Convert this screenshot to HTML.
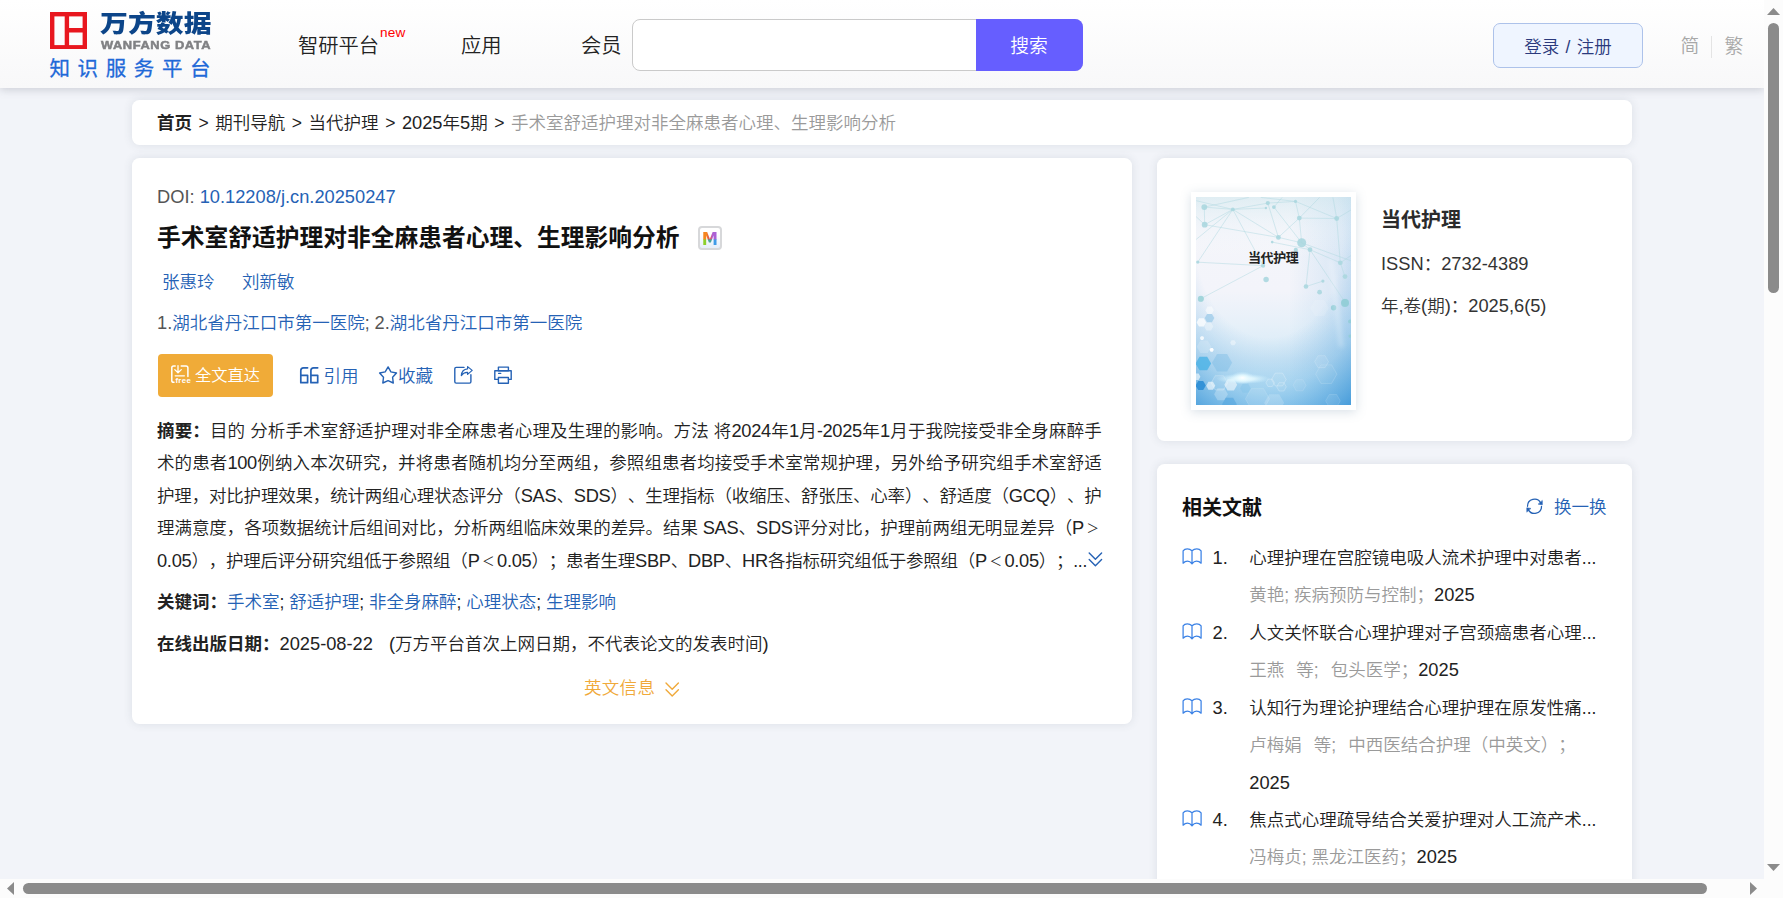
<!DOCTYPE html>
<html lang="zh-CN">
<head>
<meta charset="utf-8">
<title>手术室舒适护理对非全麻患者心理、生理影响分析</title>
<style>
*{box-sizing:border-box;margin:0;padding:0}
html,body{width:1783px;height:898px;overflow:hidden}
body{position:relative;background:#f2f4f9;font-family:"Liberation Sans","Noto Sans CJK SC",sans-serif;font-size:17.5px;font-weight:350;color:#222;text-spacing-trim:space-all}
.abs{position:absolute;white-space:nowrap}
a{color:#2562b5;text-decoration:none}
/* header */
#hdr{position:absolute;left:0;top:0;width:1764px;height:88px;background:linear-gradient(#ffffff,#f8f8f9);box-shadow:0 2px 8px rgba(100,105,120,.26)}
.nav{position:absolute;top:31px;font-size:20.3px;line-height:30px;color:#222;white-space:nowrap}
#sbox{position:absolute;left:631.5px;top:19px;width:451px;height:52px;border:1px solid #cacaca;border-radius:8px;background:#fff}
#sbtn{position:absolute;left:975.5px;top:19px;width:107px;height:52px;background:#665eff;border-radius:0 8px 8px 0;color:#fff;font-size:18.75px;line-height:55px;text-align:center}
#login{position:absolute;left:1493px;top:23px;width:150px;height:45px;border:1px solid #adc2ea;border-radius:7px;background:#eff5ff;color:#2b3a7d;font-size:17.5px;line-height:46px;word-spacing:1.5px;text-align:center}
.card{position:absolute;background:#fff;border-radius:7.5px;box-shadow:0 0 10px rgba(60,70,90,.12)}
/* scrollbars */
#vsb{position:absolute;left:1764px;top:0;width:19px;height:898px;background:#fcfcfc}
#hsb{position:absolute;left:0;top:879px;width:1764px;height:19px;background:#fcfcfc}
.thumb{position:absolute;background:#8b8b8b;border-radius:6px}
.b{font-weight:bold}
.l{font-size:1.045em}
.sep{display:inline-block;width:23.3px;text-align:center}
.g5{color:#555}
.fw{display:inline-block;width:17.5px;text-align:center;text-align-last:center;font-size:12.5px;line-height:1;vertical-align:1.5px;letter-spacing:0}
.jl{position:absolute;left:157px;width:944.5px;letter-spacing:-0.3px;height:32px;line-height:32px;text-align:justify;text-align-last:justify;white-space:nowrap;color:#222}
.rt{position:absolute;left:1249.3px;font-size:17.5px;line-height:30px;white-space:nowrap;color:#222}
.rg{color:#9a9a9a}
.sp{display:inline-block;width:12px}
.num{position:absolute;left:1212.5px;line-height:30px;white-space:nowrap;color:#222}
</style>
</head>
<body>
<div id="hdr">
  <!-- logo -->
  <svg class="abs" style="left:50px;top:11.5px" width="37" height="37.5" viewBox="0 0 37 37.5"><rect x="2.2" y="2.2" width="32.6" height="33.1" fill="none" stroke="#e8171f" stroke-width="4.4"/><rect x="14.7" y="2" width="4.4" height="34" fill="#e8171f"/><rect x="17" y="16" width="18" height="4.5" fill="#e8171f"/></svg>
  <div class="abs" id="lg1" style="left:99.5px;top:6px;font-size:24.4px;line-height:36px;font-weight:900;color:#0c4589;letter-spacing:0;transform:scaleX(1.143);transform-origin:0 0">万方数据</div>
  <div class="abs" id="lg2" style="left:100.5px;top:38.3px;font-size:11.2px;line-height:14px;font-weight:bold;color:#808184;letter-spacing:0.5px;transform:scaleX(1.15);transform-origin:0 0;-webkit-text-stroke:0.5px #808184">WANFANG DATA</div>
  <div class="abs" id="lg3" style="left:49.5px;top:54.5px;font-size:20.5px;line-height:28px;color:#1f69d8;font-weight:400;-webkit-text-stroke:0.3px #1f69d8;letter-spacing:7.6px">知识服务平台</div>
  <div class="nav" style="left:298px">智研平台</div>
  <div class="abs" style="left:380px;top:24.5px;font-size:13.6px;line-height:16px;color:#ff0000;letter-spacing:0.2px">new</div>
  <div class="nav" style="left:461px">应用</div>
  <div class="nav" style="left:581px">会员</div>
  <div id="sbox"></div>
  <div id="sbtn">搜索</div>
  <div id="login">登录 / 注册</div>
  <div class="abs" style="left:1680.5px;top:32px;font-size:18.75px;line-height:30px;color:#a8a8a8">简</div>
  <div class="abs" style="left:1711px;top:36px;width:1px;height:22px;background:#e4e4e4"></div>
  <div class="abs" style="left:1724.5px;top:32px;font-size:18.75px;line-height:30px;color:#a8a8a8">繁</div>
</div>

<!-- breadcrumb -->
<div class="card" style="left:132px;top:100px;width:1500px;height:45px"></div>
<div class="abs" style="left:157px;top:108px;line-height:30px;color:#222"><span class="b">首页</span><span class="sep">&gt;</span>期刊导航<span class="sep">&gt;</span>当代护理<span class="sep">&gt;</span><span class="l">2025</span>年<span class="l">5</span>期<span class="sep">&gt;</span><span style="color:#9a9a9a">手术室舒适护理对非全麻患者心理、生理影响分析</span></div>

<!-- article card -->
<div class="card" style="left:132px;top:158px;width:1000px;height:566px"></div>
<div class="abs" style="left:157px;top:182px;line-height:30px;color:#555"><span class="l">DOI: <a>10.12208/j.cn.20250247</a></span></div>
<div class="abs b" style="left:157px;top:220px;font-size:23.75px;line-height:36px;color:#111;letter-spacing:0">手术室舒适护理对非全麻患者心理、生理影响分析</div>
<div class="abs" style="left:698px;top:226px;width:24px;height:24px;border:2px solid #d7d8da;border-radius:4px;background:linear-gradient(#ffffff 30%,#e6eef9)"></div>
<div class="abs" id="mic" style="left:700px;top:228.5px;width:20px;height:20px;font-family:'DejaVu Sans',sans-serif;font-size:17.6px;font-weight:bold;line-height:20px;text-align:center;transform:scaleX(.93);color:transparent;background:linear-gradient(90deg,#f6861f 0,#f6861f 32%,#e2584f 42%,#e2584f 52%,#b05fd0 62%,#a565dd 100%) 0 0/100% 52% no-repeat,linear-gradient(90deg,#8ccf2a 0,#8ccf2a 32%,#4aa39a 42%,#4aa39a 58%,#3f9be8 68%,#3f9be8 100%) 0 100%/100% 50% no-repeat;-webkit-background-clip:text;background-clip:text">M</div>
<div class="abs" style="left:162px;top:267px;line-height:30px"><a>张惠玲</a></div>
<div class="abs" style="left:242px;top:267px;line-height:30px"><a>刘新敏</a></div>
<div class="abs" style="left:157px;top:307.5px;line-height:30px;color:#2562b5"><span class="l g5">1.</span>湖北省丹江口市第一医院<span class="g5">; <span class="l">2.</span></span>湖北省丹江口市第一医院</div>

<div class="abs" style="left:158px;top:354px;width:115px;height:43px;background:#f0ab38;border-radius:4px"></div>
<svg class="abs" style="left:168px;top:362px" width="26" height="26" viewBox="168 362 26 26" fill="none" stroke="#fff" stroke-width="1.5" stroke-linecap="round" stroke-linejoin="round"><path d="M175.2 365.9H173.6Q171.8 365.9 171.8 367.7V380.4Q171.8 382.3 173.6 382.3H174"/><path d="M181.2 365.9H186Q187.9 365.9 187.9 367.7V376.5"/><path d="M178 365.6V372.4M174.8 369.6L178 372.8L181.3 369.6" stroke-width="1.3"/><path d="M175.2 375.8H184.4" stroke-width="1.3"/></svg>
<div class="abs" style="left:175.4px;top:375.5px;font-size:7.8px;line-height:10px;font-weight:bold;color:#fff;letter-spacing:0.35px">free</div>
<div class="abs" style="left:195px;top:360px;font-size:16.25px;line-height:30px;color:#fff">全文直达</div>
<svg class="abs" style="left:295px;top:360px" width="230" height="30" viewBox="295 360 230 30" fill="none" stroke="#2562b5" stroke-width="1.7" stroke-linejoin="round" stroke-linecap="round">
<path d="M307.6 367.8H303.6Q300.8 367.8 300.8 370.6V382.7H307.6V375.3H300.8"/>
<path d="M317.7 367.8H313.7Q310.9 367.8 310.9 370.6V382.7H317.7V375.3H310.9"/>
<path stroke-width="1.4" d="M388.1 366.9L390.9 371.9L396.5 373.0L392.6 377.3L393.3 383.0L388.1 380.6L382.8 383.0L383.5 377.3L379.6 373.0L385.2 371.9Z"/>
<path stroke-width="1.4" d="M464 367.4H456.2Q454.8 367.4 454.8 368.8V381.7Q454.8 383.1 456.2 383.1H469.5Q470.9 383.1 470.9 381.7V374.8"/>
<path stroke-width="1.2" d="M467.6 366.6L472.2 370.4L467.6 374.4V372.3Q463.6 372 461.3 375.6Q461.8 369.3 467.6 368.8Z"/>
<path stroke-width="1.4" d="M498.4 379.4H494.8V370.7H511.2V379.4H508.4"/>
<rect stroke-width="1.4" x="498.4" y="367.1" width="10" height="3.6"/>
<rect stroke-width="1.4" x="498.4" y="377.5" width="10" height="5.7"/>
<path stroke-width="1.2" d="M498.6 373.4H500.8"/>
</svg>
<div class="abs" style="left:323.5px;top:360.5px;line-height:30px;color:#2562b5">引用</div>
<div class="abs" style="left:398px;top:360.5px;line-height:30px;color:#2562b5">收藏</div>

<div class="jl" style="top:415px"><span class="b">摘要：</span>目的 分析手术室舒适护理对非全麻患者心理及生理的影响。方法 将<span class="l">2024</span>年<span class="l">1</span>月-<span class="l">2025</span>年<span class="l">1</span>月于我院接受非全身麻醉手</div>
<div class="jl" style="top:447px">术的患者<span class="l">100</span>例纳入本次研究，并将患者随机均分至两组，参照组患者均接受手术室常规护理，另外给予研究组手术室舒适</div>
<div class="jl" style="top:480px">护理，对比护理效果，统计两组心理状态评分（<span class="l">SAS</span>、<span class="l">SDS</span>）、生理指标（收缩压、舒张压、心率）、舒适度（<span class="l">GCQ</span>）、护</div>
<div class="jl" style="top:512px">理满意度，各项数据统计后组间对比，分析两组临床效果的差异。结果 <span class="l">SAS</span>、<span class="l">SDS</span>评分对比，护理前两组无明显差异（<span class="l">P</span><span class="fw">＞</span></div>
<div class="jl" style="top:545px;width:930px"><span class="l">0.05</span>），护理后评分研究组低于参照组（<span class="l">P</span><span class="fw">＜</span><span class="l">0.05</span>）；患者生理<span class="l">SBP</span>、<span class="l">DBP</span>、<span class="l">HR</span>各指标研究组低于参照组（<span class="l">P</span><span class="fw">＜</span><span class="l">0.05</span>）；...</div>

<svg class="abs" style="left:1086px;top:550px" width="19" height="19" viewBox="1086 550 19 19" fill="none" stroke="#2562b5" stroke-width="1.4" stroke-linecap="round" stroke-linejoin="round"><path d="M1089.2 553L1095.4 559.2L1101.6 553M1089.2 559.6L1095.4 565.8L1101.6 559.6"/></svg>
<div class="abs" style="left:157px;top:587px;line-height:30px"><span class="b">关键词：</span><a>手术室</a>; <a>舒适护理</a>; <a>非全身麻醉</a>; <a>心理状态</a>; <a>生理影响</a></div>
<div class="abs" style="left:157px;top:629px;line-height:30px"><span class="b">在线出版日期：</span><span class="l">2025-08-22</span><span style="display:inline-block;width:16px"> </span><span class="l">(</span>万方平台首次上网日期，不代表论文的发表时间<span class="l">)</span></div>
<div class="abs" style="left:584px;top:672.5px;line-height:30px;color:#f0a93a;letter-spacing:0.3px">英文信息</div>
<svg class="abs" style="left:663px;top:680px" width="19" height="19" viewBox="663 680 19 19" fill="none" stroke="#f0a93a" stroke-width="1.4" stroke-linecap="round" stroke-linejoin="round"><path d="M666 683L672.2 689.2L678.4 683M666 689.8L672.2 696L678.4 689.8"/></svg>

<!-- journal card -->
<div class="card" style="left:1157px;top:158px;width:475px;height:283px"></div>
<div class="abs" style="left:1191px;top:192px;width:165px;height:218px;background:#fff;box-shadow:0 2px 10px rgba(100,130,160,.25)"></div>
<!--COVER--><svg class="abs" style="left:1196px;top:197px" width="155" height="208" viewBox="1196 197 155 208">
<defs>
<linearGradient id="cg1" x1="0" y1="0" x2="0" y2="1"><stop offset="0" stop-color="#edf3f8"/><stop offset="0.15" stop-color="#f4f5fa"/><stop offset="0.45" stop-color="#f3f4fa"/><stop offset="0.62" stop-color="#e6f0f9"/><stop offset="0.78" stop-color="#d6eaf7"/><stop offset="0.9" stop-color="#d0ecf9"/><stop offset="1" stop-color="#d3f1fd"/></linearGradient>
<radialGradient id="cg2" cx="0.47" cy="0.2" r="0.95"><stop offset="0.5" stop-color="#4b9fdb" stop-opacity="0"/><stop offset="0.75" stop-color="#4b9fdb" stop-opacity="0.32"/><stop offset="1" stop-color="#3f97d8" stop-opacity="0.9"/></radialGradient>
<linearGradient id="cg3" x1="0" y1="0" x2="1" y2="0"><stop offset="0.6" stop-color="#3f97d8" stop-opacity="0"/><stop offset="1" stop-color="#3f97d8" stop-opacity="0.18"/></linearGradient>
<radialGradient id="fl"><stop offset="0" stop-color="#fff" stop-opacity="1"/><stop offset="0.4" stop-color="#e8fbff" stop-opacity="0.8"/><stop offset="1" stop-color="#d0f0ff" stop-opacity="0"/></radialGradient>
<linearGradient id="lt" x1="0" y1="0" x2="0" y2="1"><stop offset="0" stop-color="#d5e9ef" stop-opacity="0.55"/><stop offset="0.12" stop-color="#e6f1f6" stop-opacity="0.3"/><stop offset="0.3" stop-color="#fff" stop-opacity="0"/></linearGradient>
<filter id="bl" x="-2" y="-0.2" width="5" height="1.4"><feGaussianBlur stdDeviation="2"/></filter>
</defs>
<rect x="1196" y="197" width="155" height="208" fill="url(#cg1)"/>
<rect x="1196" y="197" width="155" height="208" fill="url(#cg3)"/>
<rect x="1196" y="197" width="155" height="208" fill="url(#cg2)"/>
<rect x="1196" y="197" width="155" height="208" fill="url(#lt)"/>
<g stroke="#b2d9e2" stroke-width="1" stroke-opacity="0.5" fill="none">
<path d="M1204.3 207.1L1232.8 209.4"/>
<path d="M1196.2 200.7L1232.8 209.4"/>
<path d="M1232.8 209.4L1267.8 203.1"/>
<path d="M1232.8 209.4L1278.4 237.4"/>
<path d="M1232.8 209.4L1263.1 265.7"/>
<path d="M1204.7 224.7L1278.4 237.4"/>
<path d="M1204.7 224.7L1232.8 209.4"/>
<path d="M1196.2 262.1L1263.1 265.7"/>
<path d="M1201.0 298.6L1263.1 265.7"/>
<path d="M1197.8 262.1L1232.8 209.4"/>
<path d="M1278.4 237.4L1299.3 218.1"/>
<path d="M1299.3 218.1L1336.7 218.5"/>
<path d="M1278.4 237.4L1301.7 242.8"/>
<path d="M1273.9 207.1L1301.7 242.8"/>
<path d="M1299.3 218.1L1301.7 242.8"/>
<path d="M1301.7 242.8L1310.0 249.7"/>
<path d="M1310.0 249.7L1340.3 262.8"/>
<path d="M1310.0 249.7L1306.0 286.5"/>
<path d="M1310.0 249.7L1345.0 302.2"/>
<path d="M1306.0 286.5L1322.9 281.1"/>
<path d="M1295.5 201.4L1299.3 218.1"/>
<path d="M1295.5 201.4L1336.7 218.5"/>
<path d="M1299.3 218.1L1319.6 197.4"/>
<path d="M1336.7 218.5L1340.3 262.8"/>
<path d="M1267.8 203.1L1278.4 237.4"/>
<path d="M1248.8 197.4L1204.3 207.1"/>
<path d="M1273.9 207.1L1282.2 197.4"/>
<path d="M1204.3 207.1L1204.7 224.7"/>
<path d="M1196.2 216.7L1204.7 224.7"/>
<path d="M1267.8 203.1L1295.5 201.4"/>
<path d="M1265.9 208.0L1232.8 209.4"/>
<path d="M1336.7 218.5L1351.0 210.0"/>
<path d="M1336.7 218.5L1332.9 197.4"/>
<path d="M1301.7 242.8L1351.0 260.8"/>
<path d="M1272.2 242.1L1310.0 249.7"/>
<path d="M1196.2 239.4L1232.8 209.4"/>
<path d="M1295.5 201.4L1260.8 197.4"/>
<path d="M1340.3 262.8L1351.0 255.5"/>
<path d="M1340.3 262.8L1345.0 276.6"/>
</g>
<g fill="#abd7df" fill-opacity="0.9">
<circle cx="1204.3" cy="207.1" r="2.9"/>
<circle cx="1204.7" cy="224.7" r="2.9"/>
<circle cx="1232.8" cy="209.4" r="1.9"/>
<circle cx="1267.8" cy="203.1" r="2.1"/>
<circle cx="1273.9" cy="207.1" r="1.9"/>
<circle cx="1265.9" cy="208.0" r="1.2"/>
<circle cx="1295.5" cy="201.4" r="1.6"/>
<circle cx="1299.3" cy="218.1" r="2.4"/>
<circle cx="1336.7" cy="218.5" r="2.4"/>
<circle cx="1278.4" cy="237.4" r="2.4"/>
<circle cx="1272.2" cy="242.1" r="1.3"/>
<circle cx="1301.7" cy="242.8" r="4.5"/>
<circle cx="1310.0" cy="249.7" r="2.4"/>
<circle cx="1295.8" cy="249.9" r="2.1"/>
<circle cx="1263.1" cy="265.7" r="2.1"/>
<circle cx="1266.1" cy="279.5" r="2.7"/>
<circle cx="1197.8" cy="262.1" r="1.6"/>
<circle cx="1201.0" cy="298.6" r="2.9"/>
<circle cx="1306.0" cy="286.5" r="2.3"/>
<circle cx="1322.9" cy="281.1" r="1.6"/>
<circle cx="1319.6" cy="292.2" r="2.4"/>
<circle cx="1340.3" cy="262.8" r="2.4"/>
<circle cx="1345.0" cy="276.6" r="2.4"/>
<circle cx="1345.0" cy="302.2" r="3.5"/>
</g>
<circle cx="1200.7" cy="298.9" r="2.9" fill="#9fd3d9" fill-opacity="0.85"/>
<circle cx="1345.0" cy="302.9" r="4.0" fill="#8fccd6" fill-opacity="0.85"/>
<circle cx="1333.6" cy="307.8" r="2.7" fill="#8fccd6" fill-opacity="0.85"/>
<circle cx="1350.0" cy="321.4" r="1.9" fill="#8fccd6" fill-opacity="0.85"/>
<circle cx="1350.0" cy="336.1" r="1.6" fill="#8fccd6" fill-opacity="0.85"/>
<polygon points="1205.8,385.5 1203.2,389.9 1198.2,389.9 1195.6,385.5 1198.2,381.1 1203.2,381.1" fill="#2f8fd6" fill-opacity="0.95"/>
<polygon points="1211.1,363.5 1207.2,370.2 1199.5,370.2 1195.6,363.5 1199.5,356.7 1207.2,356.7" fill="#4fb4e6" fill-opacity="0.85"/>
<polygon points="1206.2,322.4 1203.8,326.6 1199.0,326.6 1196.6,322.4 1199.0,318.3 1203.8,318.3" fill="#ffffff" fill-opacity="0.75"/>
<polygon points="1213.9,310.3 1211.8,314.0 1207.5,314.0 1205.4,310.3 1207.5,306.6 1211.8,306.6" fill="#ffffff" fill-opacity="0.5"/>
<polygon points="1214.3,318.0 1211.9,322.2 1207.1,322.2 1204.7,318.0 1207.1,313.9 1211.9,313.9" fill="#8cc3e6" fill-opacity="0.6"/>
<polygon points="1213.3,326.5 1211.0,330.4 1206.4,330.4 1204.2,326.5 1206.4,322.5 1211.0,322.5" fill="#ffffff" fill-opacity="0.35"/>
<polygon points="1227.7,382.8 1223.5,390.0 1215.3,390.0 1211.1,382.8 1215.3,375.7 1223.5,375.7" fill="#ffffff" fill-opacity="0.12" stroke="#ffffff" stroke-width="0.6" stroke-opacity="0.4"/>
<polygon points="1237.2,384.8 1234.0,390.4 1227.5,390.4 1224.3,384.8 1227.5,379.3 1234.0,379.3" fill="#ffffff" fill-opacity="0.55"/>
<polygon points="1215.3,385.8 1213.0,389.7 1208.4,389.7 1206.2,385.8 1208.4,381.8 1213.0,381.8" fill="#ffffff" fill-opacity="0.6"/>
<polygon points="1227.9,394.2 1224.5,400.2 1217.5,400.2 1214.1,394.2 1217.5,388.2 1224.5,388.2" fill="#ffffff" fill-opacity="0.25"/>
<polygon points="1232.1,362.8 1227.1,371.5 1217.1,371.5 1212.0,362.8 1217.1,354.1 1227.1,354.1" fill="#6db4e2" fill-opacity="0.35"/>
<polygon points="1211.4,346.8 1207.7,353.1 1200.4,353.1 1196.7,346.8 1200.4,340.4 1207.7,340.4" fill="#ffffff" fill-opacity="0.18"/>
<polygon points="1204.2,338.1 1203.1,339.9 1201.0,339.9 1199.9,338.1 1201.0,336.2 1203.1,336.2" fill="#ffffff" fill-opacity="0.8"/>
<polygon points="1213.8,349.8 1212.7,351.7 1210.6,351.7 1209.5,349.8 1210.6,348.0 1212.7,348.0" fill="#ffffff" fill-opacity="0.95"/>
<polygon points="1236.0,342.8 1234.5,345.3 1231.6,345.3 1230.1,342.8 1231.6,340.2 1234.5,340.2" fill="#ffffff" fill-opacity="0.4"/>
<polygon points="1200.4,376.8 1198.6,380.1 1194.8,380.1 1192.9,376.8 1194.8,373.6 1198.6,373.6" fill="#ffffff" fill-opacity="0.6"/>
<polygon points="1286.2,379.5 1282.5,385.9 1275.2,385.9 1271.5,379.5 1275.2,373.1 1282.5,373.1" fill="#ffffff" fill-opacity="0.06" stroke="#ffffff" stroke-width="0.6" stroke-opacity="0.4"/>
<polygon points="1274.4,382.8 1272.3,386.5 1268.0,386.5 1265.9,382.8 1268.0,379.1 1272.3,379.1" fill="#ffffff" fill-opacity="0.08" stroke="#ffffff" stroke-width="0.6" stroke-opacity="0.4"/>
<polygon points="1286.3,386.8 1283.9,391.0 1279.1,391.0 1276.7,386.8 1279.1,382.7 1283.9,382.7" fill="#ffffff" fill-opacity="0.06" stroke="#ffffff" stroke-width="0.6" stroke-opacity="0.4"/>
<polygon points="1328.5,361.7 1325.1,367.7 1318.1,367.7 1314.6,361.7 1318.1,355.7 1325.1,355.7" fill="#ffffff" fill-opacity="0.08" stroke="#e6f3fb" stroke-width="0.6" stroke-opacity="0.4"/>
<polygon points="1336.9,374.1 1331.6,383.4 1320.9,383.4 1315.6,374.1 1320.9,364.9 1331.6,364.9" fill="#ffffff" fill-opacity="0.04" stroke="#d6ebf8" stroke-width="0.6" stroke-opacity="0.4"/>
<polygon points="1306.0,385.2 1302.8,390.8 1296.3,390.8 1293.1,385.2 1296.3,379.7 1302.8,379.7" fill="#ffffff" fill-opacity="0.05" stroke="#cfe6f5" stroke-width="0.6" stroke-opacity="0.4"/>
<polygon points="1340.3,400.9 1336.6,407.2 1329.3,407.2 1325.6,400.9 1329.3,394.5 1336.6,394.5" fill="#ffffff" fill-opacity="0.08" stroke="#bcdcf2" stroke-width="0.6" stroke-opacity="0.4"/>
<polygon points="1269.5,398.9 1263.5,409.3 1251.5,409.3 1245.4,398.9 1251.5,388.4 1263.5,388.4" fill="#ffffff" fill-opacity="0.1" stroke="#d6ebf8" stroke-width="0.6" stroke-opacity="0.4"/>
<polygon points="1284.2,402.9 1279.2,411.5 1269.2,411.5 1264.1,402.9 1269.2,394.2 1279.2,394.2" fill="#ffffff" fill-opacity="0.18"/>
<polygon points="1236.8,404.2 1233.1,410.6 1225.7,410.6 1222.1,404.2 1225.7,397.8 1233.1,397.8" fill="#4a9fdc" fill-opacity="0.5"/>
<polygon points="1250.8,388.2 1248.1,392.8 1242.8,392.8 1240.1,388.2 1242.8,383.5 1248.1,383.5" fill="#7cc0e8" fill-opacity="0.35"/>
<polygon points="1328.9,308.0 1324.3,316.1 1314.9,316.1 1310.2,308.0 1314.9,299.9 1324.3,299.9" fill="#ffffff" fill-opacity="0.12"/>
<ellipse cx="1243.4" cy="378.8" rx="27" ry="5.2" fill="url(#fl)"/>
<ellipse cx="1242.4" cy="377.8" rx="12" ry="6.5" fill="url(#fl)"/>
<path d="M1331 262Q1336 300 1341 345" stroke="#fff" stroke-opacity="0.25" stroke-width="5" stroke-linecap="round" filter="url(#bl)" fill="none"/>
</svg><!--/COVER-->
<div class="abs b" style="left:1248px;top:248px;font-size:13px;line-height:20px;color:#222;letter-spacing:-0.4px">当代护理</div>
<div class="abs b" style="left:1381px;top:204px;font-size:20px;line-height:32px;color:#2b2b2b;letter-spacing:0">当代护理</div>
<div class="abs" style="left:1381px;top:249px;line-height:30px;color:#333"><span class="l">ISSN</span>：<span class="l">2732-4389</span></div>
<div class="abs" style="left:1381px;top:291px;line-height:30px;color:#333">年<span class="l">,</span>卷<span class="l">(</span>期<span class="l">)</span>：<span class="l">2025,6(5)</span></div>

<!-- related card -->
<div class="card" style="left:1157px;top:464px;width:475px;height:440px"></div>
<div class="abs b" style="left:1182px;top:491.5px;font-size:20px;line-height:32px;color:#111;letter-spacing:0">相关文献</div>
<svg class="abs" style="left:1522px;top:494px" width="26" height="26" viewBox="1522 494 26 26" fill="none" stroke="#2562b5" stroke-width="1.25" stroke-linecap="round"><path d="M1527.5 506.3A7 7 0 0 1 1540.7 503.0"/><path d="M1541.5 506.3A7 7 0 0 1 1528.3 509.6"/><path d="M1542.3 500.8V504.8L1538.5 504.2Z" fill="#2562b5" stroke-width="0.6" stroke-linejoin="round"/><path d="M1526.8 511.8V507.8L1530.6 508.4Z" fill="#2562b5" stroke-width="0.6" stroke-linejoin="round"/></svg>
<div class="abs" style="left:1554px;top:491.5px;line-height:30px;color:#2562b5">换一换</div>
<svg class="abs" style="left:1180px;top:540px" width="26" height="340" viewBox="1180 540 26 340" fill="none" stroke="#3b82e6" stroke-width="1.25" stroke-linejoin="round"><path d="M1192 550.7Q1190 548.8 1187.3 548.8Q1184.5 548.8 1183.1 550.9V563.2Q1185 561.2 1187.5 561.2Q1190 561.2 1192 563.9Q1194 561.2 1196.6 561.2Q1199.2 561.2 1201.1 563.2V550.9Q1199.6 548.8 1196.8 548.8Q1194 548.8 1192 550.7V563.9"/><path d="M1192 625.7Q1190 623.8 1187.3 623.8Q1184.5 623.8 1183.1 625.9V638.2Q1185 636.2 1187.5 636.2Q1190 636.2 1192 638.9Q1194 636.2 1196.6 636.2Q1199.2 636.2 1201.1 638.2V625.9Q1199.6 623.8 1196.8 623.8Q1194 623.8 1192 625.7V638.9"/><path d="M1192 700.7Q1190 698.8 1187.3 698.8Q1184.5 698.8 1183.1 700.9V713.2Q1185 711.2 1187.5 711.2Q1190 711.2 1192 713.9Q1194 711.2 1196.6 711.2Q1199.2 711.2 1201.1 713.2V700.9Q1199.6 698.8 1196.8 698.8Q1194 698.8 1192 700.7V713.9"/><path d="M1192 812.7Q1190 810.8 1187.3 810.8Q1184.5 810.8 1183.1 812.9V825.2Q1185 823.2 1187.5 823.2Q1190 823.2 1192 825.9Q1194 823.2 1196.6 823.2Q1199.2 823.2 1201.1 825.2V812.9Q1199.6 810.8 1196.8 810.8Q1194 810.8 1192 812.7V825.9"/></svg>
<div class="num l" style="top:542.5px">1.</div>
<div class="rt" style="top:542.5px">心理护理在宫腔镜电吸人流术护理中对患者...</div>
<div class="rt" style="top:579.5px"><span class="rg">黄艳; 疾病预防与控制；</span><span class="l">2025</span></div>
<div class="num l" style="top:617.5px">2.</div>
<div class="rt" style="top:617.5px">人文关怀联合心理护理对子宫颈癌患者心理...</div>
<div class="rt" style="top:654.5px"><span class="rg">王燕<span class="sp"></span>等;<span class="sp"></span>包头医学；</span><span class="l">2025</span></div>
<div class="num l" style="top:692.5px">3.</div>
<div class="rt" style="top:692.5px">认知行为理论护理结合心理护理在原发性痛...</div>
<div class="rt" style="top:729.5px"><span class="rg">卢梅娟<span class="sp"></span>等;<span class="sp"></span>中西医结合护理（中英文）；</span></div>
<div class="rt" style="top:767.5px"><span class="l">2025</span></div>
<div class="num l" style="top:804.5px">4.</div>
<div class="rt" style="top:804.5px">焦点式心理疏导结合关爱护理对人工流产术...</div>
<div class="rt" style="top:842px"><span class="rg">冯梅贞; 黑龙江医药；</span><span class="l">2025</span></div>

<!-- scrollbars -->
<div id="vsb">
  <svg class="abs" style="left:3px;top:8px" width="13" height="7" viewBox="0 0 13 7"><path d="M0 7L6.5 0L13 7Z" fill="#8b8b8b"/></svg>
  <div class="thumb" style="left:4px;top:22.7px;width:11px;height:270.3px"></div>
  <svg class="abs" style="left:3px;top:864px" width="13" height="7" viewBox="0 0 13 7"><path d="M0 0L6.5 7L13 0Z" fill="#8b8b8b"/></svg>
</div>
<div id="hsb">
  <svg class="abs" style="left:7px;top:3px" width="7" height="13" viewBox="0 0 7 13"><path d="M7 0L0 6.5L7 13Z" fill="#8b8b8b"/></svg>
  <div class="thumb" style="left:23px;top:4px;width:1684px;height:11px"></div>
  <svg class="abs" style="left:1750px;top:3px" width="7" height="13" viewBox="0 0 7 13"><path d="M0 0L7 6.5L0 13Z" fill="#8b8b8b"/></svg>
</div>
<div class="abs" style="left:1764px;top:879px;width:19px;height:19px;background:#fcfcfc"></div>
</body>
</html>
